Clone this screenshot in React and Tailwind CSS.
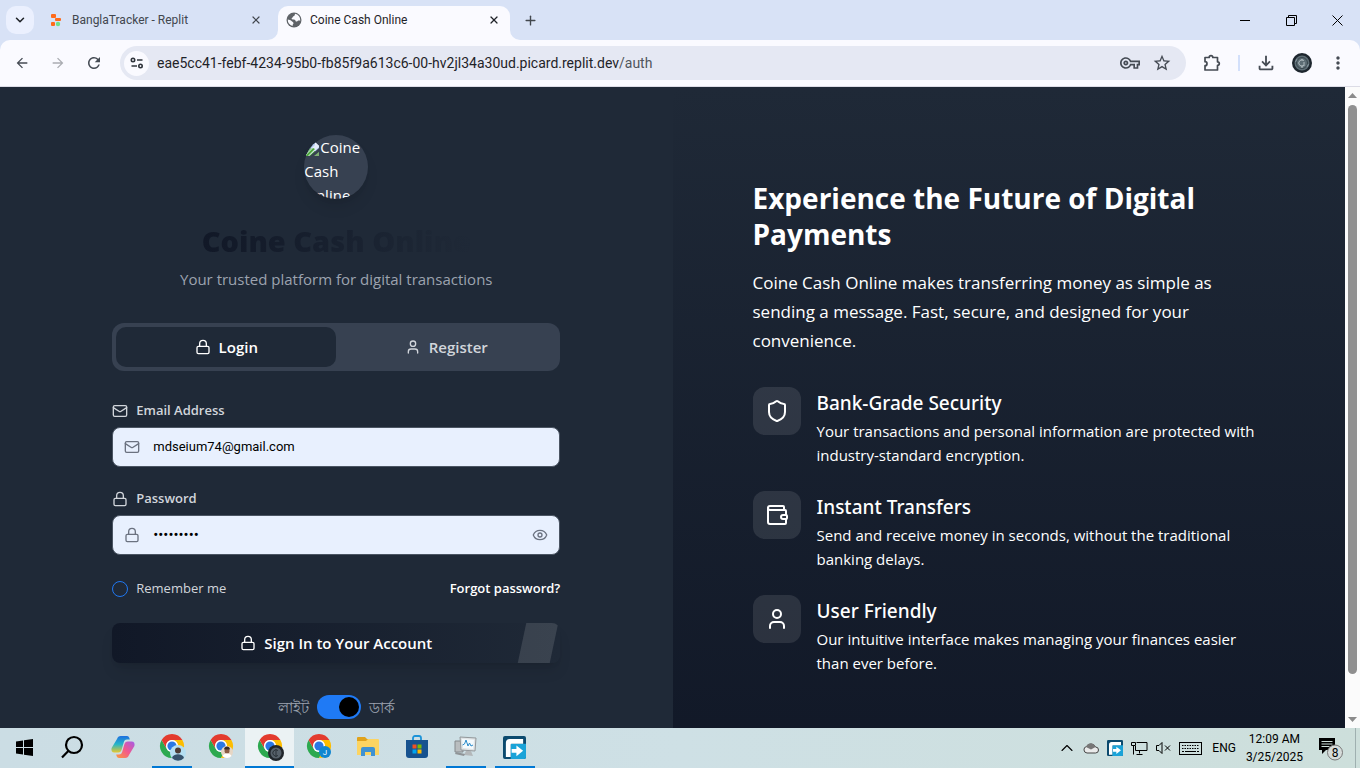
import React from "react";
import { Lock, User, Mail, Eye, Shield, Wallet, ChevronDown, ChevronUp, X, Plus } from "lucide-react";
import { MdArrowBack, MdArrowForward, MdRefresh, MdOutlineVpnKey, MdStarBorder, MdMoreVert, MdOutlineFileDownload } from "react-icons/md";

function ReplitLogo() {
  return (
    <svg width="14" height="14" viewBox="0 0 14 14" aria-hidden="true">
      <rect x="1" y="1" width="5" height="4" rx="1" fill="#ff6a1a" />
      <rect x="5" y="5" width="6" height="3" rx="1" fill="#ff6a1a" />
      <rect x="1" y="9" width="4" height="4" rx="1" fill="#ff6a1a" />
      <circle cx="8" cy="11" r="2.2" fill="#6fe08a" />
    </svg>
  );
}

function Globe() {
  return (
    <svg width="16" height="16" viewBox="0 0 16 16" aria-hidden="true">
      <circle cx="8" cy="8" r="7.500" fill="#5f6368" />
      <path d="M9 1.800c-.3 1.700-.2 2-1.500 2.400-1 .3-.7 1.600-1.700 2-.6.300 0 1.200 1 1.200 1.600 0 2.600.4 2.800 1.600.2 1 1.400.6 2 0 .8-.6 1.800-.5 2.700-.3A6.300 6.300 0 0 0 9 1.800z" fill="#fafaff" />
      <path d="M1.800 7.600c1.400.2 3 .8 4 1.700.9.800 1.800 1 1.700 2-.1 1-.9.900-.9 2.600A6.300 6.300 0 0 1 1.800 7.600z" fill="#fafaff" />
    </svg>
  );
}

function TabFlare({ flip }) {
  return (
    <svg width="10" height="10" viewBox="0 0 10 10" className={flip ? "-scale-x-100 self-end" : "self-end"} aria-hidden="true">
      <path d="M10 0v10H0A10 10 0 0 0 10 0z" fill="#fafaff" />
    </svg>
  );
}

function TabStrip() {
  return (
    <header className="flex h-10 shrink-0 bg-[#d8e2f6] font-[Roboto,sans-serif] text-xs text-[#1f2328]">
      <button aria-label="Search tabs" className="ml-1.5 mt-1.5 flex h-7 w-7 items-center justify-center rounded-[10px] bg-[#ebf0fe]">
        <ChevronDown size={14} strokeWidth={2.6} />
      </button>
      <div className="ml-4 flex w-[218px] items-center gap-2 text-[#42474e]">
        <ReplitLogo />
        <span className="flex-1 truncate">BanglaTracker - Replit</span>
        <button aria-label="Close tab" className="mr-1.5"><X size={12} strokeWidth={2.4} /></button>
      </div>
      <TabFlare />
      <div className="mt-1.5 flex w-[232px] items-center gap-2 rounded-t-[10px] bg-[#fafaff] pb-1.5 pl-2">
        <Globe />
        <span className="flex-1 truncate">Coine Cash Online</span>
        <button aria-label="Close tab" className="mr-2.5"><X size={12} strokeWidth={2.4} /></button>
      </div>
      <TabFlare flip />
      <button aria-label="New tab" className="ml-0.5 flex w-4 items-center justify-center text-[#42474e]"><Plus size={15} strokeWidth={2.2} /></button>
      <div className="ml-auto flex items-center">
        <button aria-label="Minimize" className="flex w-[46px] justify-center">
          <svg width="11" height="11" viewBox="0 0 11 11" stroke="#000"><path d="M0 5.5h10" /></svg>
        </button>
        <button aria-label="Restore" className="flex w-[46px] justify-center">
          <svg width="11" height="11" viewBox="0 0 11 11" fill="none" stroke="#000"><path d="M.5 2.5h8v8h-8zM2.500 2.500v-2h8v8h-2" /></svg>
        </button>
        <button aria-label="Close window" className="flex w-[46px] justify-center">
          <svg width="11" height="11" viewBox="0 0 11 11" fill="none" stroke="#000"><path d="M.5 .5l10 10M10.500 .5l-10 10" /></svg>
        </button>
      </div>
    </header>
  );
}

function CoinAvatar({ size }) {
  return (
    <svg width={size} height={size} viewBox="0 0 20 20" aria-hidden="true">
      <circle cx="10" cy="10" r="10" fill="#1d262e" />
      <circle cx="10" cy="10" r="7.500" fill="#5d6d75" />
      <circle cx="10" cy="10" r="5.500" fill="none" stroke="#2f3b43" strokeWidth=".8" />
      <path d="M12 7.500a3.200 3.200 0 1 0 0 5M10 6v2M10 12v3M12 9v4" fill="none" stroke="#b0bcc0" strokeWidth="1" />
      <path d="M5 6l-1.500 3M15 14l1.500-3" stroke="#87979f" />
    </svg>
  );
}

function Toolbar() {
  return (
    <div className="shrink-0 bg-[#d8e2f6]">
      <div className="flex h-[47px] items-center rounded-t-[10px] border-b border-[#dcdce6] bg-[#fafaff] pl-3.5 text-[#454b54]">
        <button aria-label="Back" className="mr-5"><MdArrowBack size={16} /></button>
        <button aria-label="Forward" className="mr-[19px] text-[#aaacb2]"><MdArrowForward size={16} /></button>
        <button aria-label="Reload" className="mr-[17px]"><MdRefresh size={18} /></button>
        <div className="flex h-[34px] flex-1 items-center rounded-full bg-[#e5e8f3] pl-1 pr-3.5">
          <button aria-label="Site information" className="mr-2 flex h-[25px] w-[25px] items-center justify-center rounded-full bg-[#fafaff]">
            <svg width="14" height="12" viewBox="0 0 14 12" fill="none" stroke="#2f343b" strokeWidth="1.600">
              <circle cx="3" cy="3" r="1.700" /><path d="M7 3h5.500M1.500 9H7" /><circle cx="10.500" cy="9" r="1.700" />
            </svg>
          </button>
          <span className="flex-1 truncate font-[Roboto,sans-serif] text-sm text-[#1f2328]">
            eae5cc41-febf-4234-95b0-fb85f9a613c6-00-hv2jl34a30ud.picard.replit.dev<span className="text-[#50555c]">/auth</span>
          </span>
          <button aria-label="Manage passwords" className="mr-3"><MdOutlineVpnKey size={20} /></button>
          <button aria-label="Bookmark this tab"><MdStarBorder size={20} /></button>
        </div>
        <button aria-label="Extensions" className="ml-[17px]">
          <svg width="18" height="18" viewBox="0 0 18 18" fill="none" stroke="#454b54" strokeWidth="1.700">
            <path d="M2 3.500h4.200a1.800 1.800 0 0 1 3.600 0h4.700v4.300a1.800 1.800 0 0 1 0 3.600V16H2v-4.300a2 2 0 0 0 0-4z" strokeLinejoin="round" />
          </svg>
        </button>
        <span className="ml-[17px] mr-[15px] h-4 w-0.5 bg-[#d3e0fb]" />
        <button aria-label="Downloads" className="mr-[15px]"><MdOutlineFileDownload size={22} /></button>
        <button aria-label="Profile" className="mr-4"><CoinAvatar size={20} /></button>
        <button aria-label="Menu" className="mr-3"><MdMoreVert size={20} /></button>
      </div>
    </div>
  );
}

function BrokenImage() {
  return (
    <svg width="16" height="16" viewBox="0 0 16 16" className="inline" aria-hidden="true">
      <path d="M1 1h10l4 4v10H1z" fill="#b9cdf3" />
      <path d="M11 1l4 4h-4z" fill="#eef2fa" />
      <path d="M1 15v-3l6-5 5 4 3-1v5z" fill="#4da83a" />
      <path d="M1 14L12 3l3 2v1L5 15z" fill="#e4ecfa" />
      <path d="M6 15l9-8v4l-4 4z" fill="#374151" />
      <path d="M10 15l5-4v4z" fill="#7fae74" />
      <path d="M1 15L9 7l2 1-7 7z" fill="#4da83a" />
    </svg>
  );
}

function Field({ id, label, Icon, children }) {
  return (
    <div>
      <label htmlFor={id} className="mb-2 flex h-4 items-center gap-2 text-[13px] font-semibold text-[#d1d5db]">
        <Icon size={16} strokeWidth={2} />
        {label}
      </label>
      <div className="flex h-10 items-center gap-[13px] rounded-lg border border-[#4b5563] bg-[#e8f0fe] px-[11px] text-[#6b7280]">
        <Icon size={16} strokeWidth={2} />
        {children}
      </div>
    </div>
  );
}

function LoginPanel() {
  return (
    <section className="flex flex-col items-center px-8 py-12">
      <div className="w-full max-w-md">
        <div className="mx-auto h-16 w-16 overflow-hidden rounded-full bg-[#374151] text-[15px] leading-6 text-white shadow-lg">
          <BrokenImage />Coine Cash Online
        </div>
        <h1 className="mt-6 text-center text-[29px] leading-9 font-extrabold">
          <span className="bg-linear-to-r from-[#111827] to-[#1f2937] bg-clip-text text-transparent">Coine Cash Online</span>
        </h1>
        <p className="mt-2 text-center text-[15px] leading-6 text-[#9ca3af]">Your trusted platform for digital transactions</p>

        <div className="mt-8 grid h-12 grid-cols-2 rounded-xl bg-[#374151] p-1 text-[15px] font-semibold" role="tablist">
          <button role="tab" aria-selected="true" className="flex items-center justify-center gap-2 rounded-[10px] bg-[#1f2937] text-white"><Lock size={16} strokeWidth={2} />Login</button>
          <button role="tab" aria-selected="false" className="flex items-center justify-center gap-2 text-[#d1d5db]"><User size={16} strokeWidth={2} />Register</button>
        </div>

        <form className="mt-8 flex flex-col gap-6" onSubmit={(e) => e.preventDefault()}>
          <Field id="email" label="Email Address" Icon={Mail}>
            <input id="email" type="email" defaultValue="mdseium74@gmail.com" className="min-w-0 flex-1 bg-transparent font-[Roboto,sans-serif] text-[13px] text-black outline-none" />
          </Field>
          <Field id="password" label="Password" Icon={Lock}>
            <input id="password" type="password" defaultValue="123456789" className="min-w-0 flex-1 bg-transparent font-[Roboto,sans-serif] text-[15px] text-black outline-none" />
            <button type="button" aria-label="Show password"><Eye size={16} strokeWidth={2} /></button>
          </Field>
          <div className="flex h-5 items-center justify-between text-[13px]">
            <label className="flex items-center gap-2 text-[#d1d5db]">
              <input type="checkbox" className="h-4 w-4 appearance-none rounded-full border border-[#1f78f2]" />
              Remember me
            </label>
            <a href="#forgot" className="font-semibold text-white">Forgot password?</a>
          </div>
          <button type="submit" className="relative flex h-10 items-center justify-center gap-2 overflow-hidden rounded-lg bg-linear-to-r from-[#111827] to-[#1f2937] text-[15px] font-semibold text-white shadow-lg">
            <Lock size={16} strokeWidth={2} />
            Sign In to Your Account
            <span className="absolute inset-y-0 right-1.5 w-8 -skew-x-12 bg-white/12" />
          </button>
        </form>

        <div className="mt-8 flex h-6 items-center justify-center gap-2 text-[15px] text-[#9ca3af]">
          <span>লাইট</span>
          <button role="switch" aria-checked="true" aria-label="Theme" className="flex h-6 w-11 items-center justify-end rounded-full bg-[#1f7af5] px-0.5">
            <span className="h-5 w-5 rounded-full bg-black" />
          </button>
          <span>ডার্ক</span>
        </div>
      </div>
    </section>
  );
}

const FEATURES = [
  { Icon: Shield, title: "Bank-Grade Security", text: "Your transactions and personal information are protected with industry-standard encryption." },
  { Icon: Wallet, title: "Instant Transfers", text: "Send and receive money in seconds, without the traditional banking delays." },
  { Icon: User, title: "User Friendly", text: "Our intuitive interface makes managing your finances easier than ever before." },
];

function HeroPanel() {
  return (
    <section className="flex flex-col justify-center bg-linear-to-b from-[#1f2937] to-[#111827] px-20 text-white">
      <div className="max-w-lg">
        <h2 className="text-[28px] leading-9 font-bold">Experience the Future of Digital Payments</h2>
        <p className="mt-4 mb-8 max-w-[480px] text-[17px] leading-[29px]">Coine Cash Online makes transferring money as simple as sending a message. Fast, secure, and designed for your convenience.</p>
        <ul className="flex flex-col gap-6">
          {FEATURES.map(({ Icon, title, text }) => (
            <li key={title} className="flex items-start gap-4">
              <span className="flex h-12 w-12 shrink-0 items-center justify-center rounded-xl bg-white/10"><Icon size={24} /></span>
              <div className="max-w-[440px]">
                <h3 className="mb-0.5 pt-0.5 font-['Noto_Sans',sans-serif] text-[19px] leading-7 font-medium">{title}</h3>
                <p className="text-[15px] leading-6">{text}</p>
              </div>
            </li>
          ))}
        </ul>
      </div>
    </section>
  );
}

function Scrollbar() {
  return (
    <div className="flex w-[15px] shrink-0 flex-col items-center justify-between bg-[#fbfbfb] py-1.5" aria-hidden="true">
      <svg width="9" height="6" viewBox="0 0 9 6"><path d="M4.500 0L9 5H0z" fill="#8b8b8b" /></svg>
      <div className="my-1.5 flex w-[9px] flex-1 flex-col">
        <span className="flex-[94] rounded-full bg-[#8f8f8f]" />
        <span className="flex-[6]" />
      </div>
      <svg width="9" height="6" viewBox="0 0 9 6"><path d="M4.500 6L9 1H0z" fill="#8b8b8b" /></svg>
    </div>
  );
}

function Chrome({ children }) {
  return (
    <svg width="28" height="28" viewBox="0 0 28 28" aria-hidden="true">
      <g transform="translate(2 1)">
        <path d="M1.600 6l5.200 9a6 6 0 0 0 10.400 0L12 24A12 12 0 0 1 1.600 6z" fill="#2da94f" />
        <path d="M22.400 6A12 12 0 0 1 12 24l5.200-9A6 6 0 0 0 12 6z" fill="#fdbd00" />
        <path d="M12 0a12 12 0 0 1 10.400 6H12a6 6 0 0 0-5.200 9L1.600 6A12 12 0 0 1 12 0z" fill="#e33b2e" />
        <circle cx="12" cy="12" r="6" fill="#fff" />
        <circle cx="12" cy="12" r="4.600" fill="#2a78e4" />
      </g>
      {children}
    </svg>
  );
}

function FIcon({ size }) {
  return (
    <svg width={size} height={size} viewBox="0 0 24 24" aria-hidden="true">
      <rect width="24" height="24" rx="2" fill="#0c4a6e" />
      <path d="M8 8h16v14a2 2 0 0 1-2 2H8z" fill="#1ba3d8" />
      <path d="M3 22V7a4 4 0 0 1 4-4h14v5H9a1 1 0 0 0-1 1v13z" fill="#fff" />
      <path d="M9 13.500h5V10l7 5.500-7 5.500v-3.500H9z" fill="#fff" />
    </svg>
  );
}

const APPS = [
  { name: "Start", icon: <svg width="17" height="17" viewBox="0 0 17 17"><path d="M0 2.400L7 1.400V8H0zM8 1.300L17 0v8H8zM0 9h7v6.600l-7-1zM8 9h9v8l-9-1.300z" /></svg> },
  { name: "Search", icon: <svg width="26" height="24" viewBox="2 0 26 24" fill="none" stroke="#000" strokeWidth="2.200"><circle cx="15" cy="10" r="8" /><path d="M9.300 16L3 22.500" /></svg> },
  {
    name: "Copilot",
    icon: (
      <svg width="24" height="24" viewBox="0 0 24 24">
        <defs>
          <linearGradient id="cpa" x1="0" y1="0" x2="0" y2="1"><stop offset="0" stopColor="#1d6fe0" /><stop offset=".5" stopColor="#25b6c8" /><stop offset="1" stopColor="#e8c72c" /></linearGradient>
          <linearGradient id="cpb" x1="1" y1="0" x2="0" y2="1"><stop offset="0" stopColor="#a45be8" /><stop offset=".5" stopColor="#f2598c" /><stop offset="1" stopColor="#fb9a3c" /></linearGradient>
        </defs>
        <path d="M6 4c.7-2 1.800-3 3.800-3h6c2 0 2.500 1.500 3 3.500H16c-2 0-2.700 1-3.300 3l-2 7c-.6 2-1.500 3-3.500 3H3.500C.8 17.500 0 15.500.6 13z" fill="url(#cpa)" />
        <path d="M18 20c-.7 2-1.800 3-3.800 3h-6c-2 0-2.500-1.500-3-3.500H8c2 0 2.700-1 3.300-3l2-7c.6-2 1.500-3 3.500-3h3.700c2.700 0 3.500 2 2.900 4.500z" fill="url(#cpb)" />
      </svg>
    ),
  },
  { name: "Chrome, profile 1", open: true, icon: <Chrome><circle cx="20" cy="20" r="8" fill="#b5dff2" /><circle cx="20" cy="17.500" r="3" fill="#4d3b35" /><path d="M14 25c1-5 11-5 12 0a8 8 0 0 1-12 0z" fill="#36526c" /></Chrome> },
  { name: "Chrome, profile 2", icon: <Chrome><circle cx="20" cy="19" r="6" fill="#e6d6c4" /><circle cx="20" cy="18" r="2.500" fill="#8a5a44" /><path d="M17 16.500c0-4 6-4 6 0z" fill="#382c28" /><path d="M15.500 23c1-3.500 8-3.500 9 0a6 6 0 0 1-9 0z" fill="#fff" /></Chrome> },
  { name: "Chrome, profile 3", open: true, active: true, icon: <Chrome><circle cx="20" cy="20" r="8" fill="#20262b" /><circle cx="20" cy="20" r="5.500" fill="#56616a" /><path d="M22 17.500a3.200 3.200 0 1 0 0 5M20 16v8" fill="none" stroke="#2a3238" /></Chrome> },
  { name: "Chrome, profile 4", icon: <Chrome><circle cx="20" cy="19" r="6" fill="#0f86d0" /><text x="20" y="22" textAnchor="middle" fontSize="8" fill="#fff">J</text></Chrome> },
  { name: "File Explorer", icon: <svg width="22" height="20" viewBox="0 0 22 20"><path d="M0 1a1 1 0 0 1 1-1h7l2 2h11v5H0z" fill="#e0a21b" /><path d="M0 4h9l2-2h10a1 1 0 0 1 1 1v15H0z" fill="#fcd462" /><path d="M4 19v-7a2 2 0 0 1 2-2h10a2 2 0 0 1 2 2v7h-4v-4H8v4z" fill="#3f92d2" /></svg> },
  { name: "Microsoft Store", icon: <svg width="24" height="24" viewBox="0 0 24 24"><path d="M8 6V3a2 2 0 0 1 2-2h4a2 2 0 0 1 2 2v3" fill="none" stroke="#1c93d8" strokeWidth="1.800" /><path d="M1 5h22v15a3 3 0 0 1-3 3H4a3 3 0 0 1-3-3z" fill="#17528f" /><path d="M7.500 9.500h4v4h-4z" fill="#f25022" /><path d="M12.500 9.500h4v4h-4z" fill="#7fba00" /><path d="M7.500 14.500h4v4h-4z" fill="#00a4ef" /><path d="M12.500 14.500h4v4h-4z" fill="#ffb900" /></svg> },
  { name: "Resource Monitor", open: true, icon: <svg width="24" height="22" viewBox="0 0 24 22"><path d="M1 5h8v11H1z" fill="#b9bdbf" stroke="#84898c" /><path d="M6 1l16 1-1 13-14-1z" fill="#dfe3e5" stroke="#92979a" /><path d="M8 3l12 .8-.8 9.200L9 12z" fill="#f4fafd" /><path d="M8.500 9l2-1 1.500-4 2 6 1.500-3 1.500 3 2-1" fill="none" stroke="#2b8ccb" /><path d="M12 15h5l2 5-9-1z" fill="#b3b7b9" /><path d="M2 16l9 2-1 2-9-2z" fill="#8f9497" /></svg> },
  { name: "File transfer", open: true, icon: <FIcon size={23} /> },
];

function Taskbar() {
  return (
    <footer className="flex h-10 shrink-0 bg-linear-to-r from-[#cbdde4] via-[#cee0e5] to-[#cddfdb] font-[Roboto,sans-serif] text-xs text-black">
      {APPS.map((app) => (
        <button key={app.name} aria-label={app.name} className={app.active ? "flex w-[49px] flex-col items-center bg-[#ebf2f4]" : "flex w-[49px] flex-col items-center"}>
          <span className="flex flex-1 items-center">{app.icon}</span>
          <span className={app.open ? (app.active ? "h-0.5 w-full bg-[#0078d4]" : "h-0.5 w-10 bg-[#0078d4]") : "h-0.5"} />
        </button>
      ))}
      <div className="ml-auto flex items-center">
        <button aria-label="Show hidden icons" className="mr-1.5"><ChevronUp size={20} strokeWidth={1.300} /></button>
        <svg width="16" height="12" viewBox="0 0 16 12" className="mr-2" aria-label="OneDrive">
          <path d="M4 11a3.300 3.300 0 0 1-.5-6.500A5 5 0 0 1 12.500 5a3 3 0 0 1 0 6z" fill="#e9eaea" stroke="#444" />
          <path d="M3 5a5 5 0 0 1 9.500 0L8 7.500z" fill="#777" />
        </svg>
        <span className="mr-2"><FIcon size={16} /></span>
        <svg width="17" height="15" viewBox="0 0 17 15" fill="none" stroke="#000" className="mr-2" aria-label="Network">
          <path d="M5.500 1.500h10.500v8H4.500V5M.5 1.500h4v3h-4zM2.500 4.500v9M8.500 9.500v3M5.500 13.500h6" />
        </svg>
        <svg width="15" height="14" viewBox="0 0 15 14" fill="none" stroke="#000" className="mr-2" aria-label="Muted">
          <path d="M.5 4.500h2.500l3-3v11l-3-3H.5zM9 4.500l5 5M14 4.500l-5 5" />
        </svg>
        <svg width="23" height="13" viewBox="0 0 23 13" fill="none" stroke="#000" className="mr-2.5" aria-label="Touch keyboard">
          <rect x=".5" y=".5" width="22" height="12" />
          <path d="M3 3.500h17M3 6.500h17" strokeDasharray="1.500 1" /><path d="M3 9.500h2M6 9.500h11M18 9.500h2" />
        </svg>
        <span className="mr-2.5">ENG</span>
        <div className="mr-3.5 text-center leading-[18px]">
          <div>12:09 AM</div>
          <div>3/25/2025</div>
        </div>
        <button aria-label="Notifications" className="mr-3">
          <svg width="26" height="26" viewBox="0 0 26 26">
            <path d="M2 3h16v12H9l-4 4v-4H2z" /><path d="M4.500 6.500h11M4.500 9h11M4.500 11.500h8" stroke="#cddfdb" />
            <circle cx="18" cy="17.500" r="7.500" fill="#d6dcda" stroke="#777" />
            <text x="18" y="22" textAnchor="middle" fontSize="12">8</text>
          </svg>
        </button>
        <span className="mr-1 h-10 w-px bg-[#9fb0b0]" />
      </div>
    </footer>
  );
}

export default function App() {
  return (
    <div className="flex h-screen flex-col overflow-hidden font-['Open_Sans','Noto_Sans',sans-serif]">
      <TabStrip />
      <Toolbar />
      <div className="flex min-h-0 flex-1">
        <main className="min-w-0 flex-1 overflow-hidden bg-[#1f2937]">
          <div className="grid grid-cols-2">
            <LoginPanel />
            <HeroPanel />
          </div>
        </main>
        <Scrollbar />
      </div>
      <Taskbar />
    </div>
  );
}
